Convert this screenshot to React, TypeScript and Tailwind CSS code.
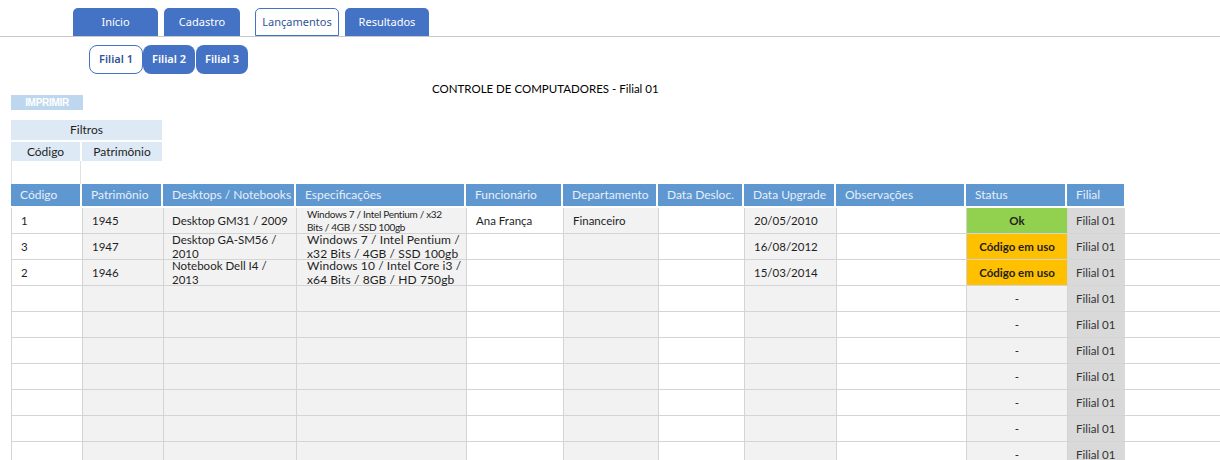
import React from 'react';

type Col = { key: string; label: string; w: string; hw: string; bg: string };

// column widths in px (cell + separator), body background per column
const cols: Col[] = [
  { key: 'codigo', label: 'Código', w: 'w-[71px]', hw: 'w-[69px]', bg: 'bg-white' },
  { key: 'patrimonio', label: 'Patrimônio', w: 'w-[81px]', hw: 'w-[79px]', bg: 'bg-[#f2f2f2]' },
  { key: 'modelo', label: 'Desktops / Notebooks', w: 'w-[133px]', hw: 'w-[131px]', bg: 'bg-[#f2f2f2]' },
  { key: 'spec', label: 'Especificações', w: 'w-[170px]', hw: 'w-[168px]', bg: 'bg-[#f2f2f2]' },
  { key: 'func', label: 'Funcionário', w: 'w-[97px]', hw: 'w-[95px]', bg: 'bg-white' },
  { key: 'depto', label: 'Departamento', w: 'w-[95px]', hw: 'w-[93px]', bg: 'bg-[#f2f2f2]' },
  { key: 'desloc', label: 'Data Desloc.', w: 'w-[86px]', hw: 'w-[84px]', bg: 'bg-white' },
  { key: 'upgrade', label: 'Data Upgrade', w: 'w-[92px]', hw: 'w-[90px]', bg: 'bg-[#f2f2f2]' },
  { key: 'obs', label: 'Observações', w: 'w-[130px]', hw: 'w-[128px]', bg: 'bg-white' },
  { key: 'status', label: 'Status', w: 'w-[101px]', hw: 'w-[99px]', bg: 'bg-[#f2f2f2]' },
  { key: 'filial', label: 'Filial', w: 'w-[57px]', hw: 'w-[57px]', bg: 'bg-[#d9d9d9]' },
];

type Row = {
  codigo?: string;
  patrimonio?: string;
  modelo?: string[];
  spec?: string[];
  specSmall?: boolean;
  func?: string;
  depto?: string;
  upgrade?: string;
  status?: 'ok' | 'uso';
};

const rows: Row[] = [
  {
    codigo: '1',
    patrimonio: '1945',
    modelo: ['Desktop GM31 / 2009'],
    spec: ['Windows 7 / Intel Pentium / x32', 'Bits / 4GB / SSD 100gb'],
    specSmall: true,
    func: 'Ana França',
    depto: 'Financeiro',
    upgrade: '20/05/2010',
    status: 'ok',
  },
  {
    codigo: '3',
    patrimonio: '1947',
    modelo: ['Desktop GA-SM56 /', '2010'],
    spec: ['Windows 7 / Intel Pentium /', 'x32 Bits / 4GB / SSD 100gb'],
    upgrade: '16/08/2012',
    status: 'uso',
  },
  {
    codigo: '2',
    patrimonio: '1946',
    modelo: ['Notebook Dell I4 /', '2013'],
    spec: ['Windows 10 / Intel Core i3 /', 'x64 Bits / 8GB / HD 750gb'],
    upgrade: '15/03/2014',
    status: 'uso',
  },
  {}, {}, {}, {}, {}, {}, {}, {},
];

const tabs = ['Início', 'Cadastro', 'Lançamentos', 'Resultados'];

function Lines({ lines }: { lines: string[] }) {
  return (
    <div className="flex flex-col whitespace-nowrap">
      {lines.map((l) => (
        <span key={l}>{l}</span>
      ))}
    </div>
  );
}

function Cell({ col, row }: { col: Col; row: Row }) {
  const base = `${col.w} h-full shrink-0 border-r border-[#d4d4d4] flex items-center`;

  if (col.key === 'status') {
    if (row.status === 'ok')
      return <div className={`${base} justify-center bg-[#92d050] font-bold`}>Ok</div>;
    if (row.status === 'uso')
      return <div className={`${base} justify-center bg-[#ffc000] font-bold`}>Código em uso</div>;
    return <div className={`${base} justify-center ${col.bg}`}>-</div>;
  }

  if (col.key === 'filial')
    return <div className={`${base} ${col.bg} border-r-0 pl-[8px] text-[#333]`}>Filial 01</div>;

  if (col.key === 'spec') {
    return (
      <div
        className={`${base} ${col.bg} pl-[10px] overflow-visible ${
          row.specSmall ? 'text-[10px] leading-[13px] tracking-[-0.3px]' : 'text-[12px] leading-[14px] tracking-[0.1px]'
        }`}
      >
        {row.spec && <Lines lines={row.spec} />}
      </div>
    );
  }

  if (col.key === 'modelo') {
    return (
      <div className={`${base} ${col.bg} pl-[8px] leading-[14px]`}>
        {row.modelo && <Lines lines={row.modelo} />}
      </div>
    );
  }

  const value = (row as Record<string, string | undefined>)[col.key];
  return <div className={`${base} ${col.bg} pl-[9px]`}>{value}</div>;
}

export default function App() {
  return (
    <div className="w-[1220px] h-[460px] overflow-hidden bg-white text-[12px] text-[#1f1f1f] font-['Lato','Liberation_Sans',sans-serif]">
      {/* navegação principal */}
      <div className="flex gap-[6px] pl-[73px] pt-[8px] border-b border-[#c8c8c8] font-['Noto_Sans',sans-serif] text-[11px]">
        {tabs.map((t) =>
          t === 'Lançamentos' ? (
            <div
              key={t}
              className="ml-[9px] w-[84px] h-[28px] -mb-px rounded-t-[5px] border border-[#4472c4] bg-white text-[#2f5597] flex items-center justify-center"
            >
              {t}
            </div>
          ) : (
            <div
              key={t}
              className={`${t === 'Início' ? 'w-[85px]' : t === 'Cadastro' ? 'w-[76px]' : 'w-[84px]'} h-[28px] rounded-t-[5px] bg-[#4472c4] text-white flex items-center justify-center`}
            >
              {t}
            </div>
          )
        )}
      </div>

      {/* filiais */}
      <div className="flex pl-[89px] pt-[8px] font-['Noto_Sans',sans-serif] text-[11px] font-semibold">
        <div className="w-[54px] h-[29px] rounded-[8px] border border-[#4472c4] bg-white text-[#2f5597] flex items-center justify-center">
          Filial 1
        </div>
        <div className="w-[52px] h-[29px] rounded-[8px] bg-[#4472c4] text-white flex items-center justify-center">
          Filial 2
        </div>
        <div className="ml-[1px] w-[52px] h-[29px] rounded-[8px] bg-[#4472c4] text-white flex items-center justify-center">
          Filial 3
        </div>
      </div>

      {/* título e impressão */}
      <div className="flex items-start h-[46px] pt-[8px]">
        <div className="ml-[11px] mt-[13px] w-[72px] h-[15px] bg-[#bdd7ee] text-white text-[10px] font-bold flex items-center justify-center font-['Liberation_Sans',sans-serif] tracking-[-0.3px]">
          IMPRIMIR
        </div>
        <div className="ml-[349px] text-[11.5px] leading-[14px] text-black">
          CONTROLE DE COMPUTADORES - Filial 01
        </div>
      </div>

      {/* filtros */}
      <div className="ml-[11px] w-[151px]">
        <div className="h-[20px] bg-[#dde9f5] flex items-center justify-center">Filtros</div>
        <div className="flex gap-[2px] mt-[2px]">
          <div className="w-[69px] h-[19px] bg-[#dde9f5] flex items-center justify-center">Código</div>
          <div className="w-[80px] h-[19px] bg-[#dde9f5] flex items-center justify-center">Patrimônio</div>
        </div>
        <div className="flex h-[23px]">
          <div className="w-[70px] border-l border-r border-[#e2e2e2]" />
        </div>
      </div>

      {/* tabela */}
      <div className="ml-[11px]">
        <div className="flex h-[22px] mb-[2px]">
          {cols.map((c) => (
            <div key={c.key} className={`${c.w} shrink-0 flex`}>
              <div className={`${c.hw} h-full bg-[#5f97d0] text-[#e6eff9] pl-[9px] flex items-center`}>
                {c.label}
              </div>
            </div>
          ))}
        </div>
        <div className="text-[11.5px]">
          {rows.map((r, i) => (
            <div key={i} className="flex h-[26px] border-b border-l border-[#d4d4d4]">
              {cols.map((c) => (
                <Cell key={c.key} col={c} row={r} />
              ))}
            </div>
          ))}
        </div>
      </div>
    </div>
  );
}
